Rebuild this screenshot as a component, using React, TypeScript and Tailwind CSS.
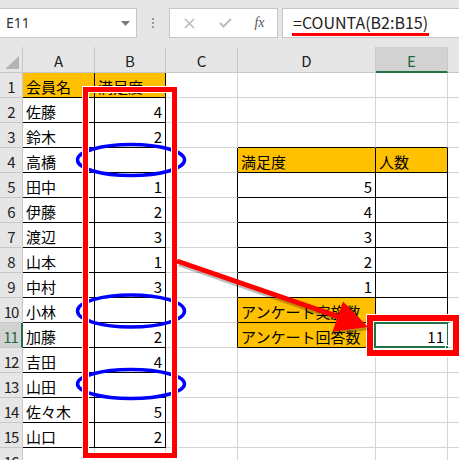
import React from 'react';

const cellFont = "font-['Noto_Sans_CJK_JP',sans-serif]";

const rows: string[][] = [
  ['会員名', '満足度', '', '', '', ''],
  ['佐藤', '4', '', '', '', ''],
  ['鈴木', '2', '', '', '', ''],
  ['高橋', '', '', '満足度', '人数', ''],
  ['田中', '1', '', '5', '', ''],
  ['伊藤', '2', '', '4', '', ''],
  ['渡辺', '3', '', '3', '', ''],
  ['山本', '1', '', '2', '', ''],
  ['中村', '3', '', '1', '', ''],
  ['小林', '', '', 'アンケート実施数', '', ''],
  ['加藤', '2', '', 'アンケート回答数', '11', ''],
  ['吉田', '4', '', '', '', ''],
  ['山田', '', '', '', '', ''],
  ['佐々木', '5', '', '', '', ''],
  ['山口', '2', '', '', '', ''],
  ['', '', '', '', '', ''],
];

const colNames = ['A', 'B', 'C', 'D', 'E', 'F'];
const colWidths = ['w-[72px]', 'w-[71px]', 'w-[72px]', 'w-[138px]', 'w-[72px]', 'w-[72px]'];

// A1:B15 and D4:E11 carry black borders
function inTable(r: number, c: number) {
  if (c <= 1 && r >= 0 && r <= 14) return true;
  if ((c === 3 || c === 4) && r >= 3 && r <= 10) return true;
  return false;
}

function isYellow(r: number, c: number) {
  if (r === 0 && c <= 1) return true;
  if (r === 3 && (c === 3 || c === 4)) return true;
  if ((r === 9 || r === 10) && c === 3) return true;
  return false;
}

function clsx(...parts: (string | false | undefined)[]) {
  return parts.filter(Boolean).join(' ');
}

function Cell({ r, c, value }: { r: number; c: number; value: string }) {
  const right = inTable(r, c) || inTable(r, c + 1);
  const bottom = inTable(r, c) || inTable(r + 1, c);
  const numeric = /^\d+$/.test(value);
  const selected = r === 10 && c === 4;
  return (
    <div
      className={clsx(
        'relative h-full shrink-0 flex items-center border-r border-b px-[3px] text-[15px] leading-none text-black',
        colWidths[c],
        right ? 'border-r-black' : 'border-r-[#d4d4d4]',
        bottom ? 'border-b-black' : 'border-b-[#d4d4d4]',
        isYellow(r, c) ? 'bg-[#ffc000]' : 'bg-white',
        numeric ? 'justify-end' : 'justify-start'
      )}
    >
      <span className="pt-[2px] whitespace-nowrap">{value}</span>
      {selected && (
        <>
          <div className="absolute left-[-2px] top-[-1px] right-[-2px] bottom-[-1px] border-2 border-[#217346]" />
          <div className="absolute right-[-4px] bottom-[-4px] w-[6px] h-[6px] bg-[#217346] border border-white" />
        </>
      )}
    </div>
  );
}

function Toolbar() {
  return (
    <div className="h-[47px] bg-[#e6e6e6] flex items-start pt-[8px]">
      <div className="w-[137px] h-[30px] bg-white border border-l-0 border-[#c6c6c6] flex items-center justify-between pl-[6px] pr-[6px]">
        <span className="font-['Noto_Sans',sans-serif] text-[14px] text-[#333] leading-none">E11</span>
        <svg width="9" height="5" viewBox="0 0 9 5">
          <path d="M0 0 H9 L4.5 5 Z" fill="#7a7a7a" />
        </svg>
      </div>
      <div className="w-[32px] h-[30px] flex flex-col items-center justify-center gap-[2px]">
        <div className="w-[2px] h-[2px] bg-[#9a9a9a]" />
        <div className="w-[2px] h-[2px] bg-[#9a9a9a]" />
        <div className="w-[2px] h-[2px] bg-[#9a9a9a]" />
      </div>
      <div className="w-[109px] h-[30px] bg-white border border-[#c6c6c6] flex items-center">
        <div className="w-[38px] flex justify-center">
          <svg width="11" height="11" viewBox="0 0 11 11">
            <path d="M1 1 L10 10 M10 1 L1 10" stroke="#bcbcbc" strokeWidth="1.6" />
          </svg>
        </div>
        <div className="w-[34px] flex justify-center">
          <svg width="13" height="10" viewBox="0 0 13 10">
            <path d="M1 5 L4.5 8.5 L12 1" stroke="#bcbcbc" strokeWidth="2" fill="none" />
          </svg>
        </div>
        <div className="flex-1 flex justify-center">
          <span className="font-['Liberation_Serif',serif] italic text-[14px] text-[#555] leading-none">fx</span>
        </div>
      </div>
      <div className="ml-[4px] flex-1 h-[30px] bg-white border border-r-0 border-[#c6c6c6] flex items-center pl-[9px]">
        <span className={clsx(cellFont, 'text-[16px] leading-none text-[#222] border-b-[3px] border-[#ff0000] pb-[3px] pt-[4px] px-[1px]')}>
          =COUNTA(B2:B15)
        </span>
      </div>
    </div>
  );
}

function HeaderRow() {
  return (
    <div className={clsx('flex h-[26px]', cellFont)}>
      <div className="w-[23px] shrink-0 h-full bg-[#e6e6e6] border-r border-b border-[#c8c8c8] flex items-end justify-end pr-[3px] pb-[3px]">
        <svg width="14" height="13" viewBox="0 0 14 13">
          <path d="M14 0 V13 H0 Z" fill="#b4b4b4" />
        </svg>
      </div>
      {colNames.map((n, i) => {
        const sel = n === 'E';
        return (
          <div
            key={n}
            className={clsx(
              'shrink-0 h-full flex items-center justify-center text-[15px] leading-none border-r border-[#c8c8c8]',
              colWidths[i],
              sel ? 'bg-[#d2d2d2] text-[#1e6b40] border-b-2 border-b-[#217346]' : 'bg-[#e6e6e6] text-[#222] border-b border-b-[#c8c8c8]'
            )}
          >
            <span className="pt-[2px]">{n}</span>
          </div>
        );
      })}
    </div>
  );
}

function Overlay() {
  // arrow from the red frame round column B to the red frame round E11
  const tip = { x: 368, y: 327 };
  const start = { x: 177, y: 261 };
  const dx = tip.x - start.x;
  const dy = tip.y - start.y;
  const len = Math.hypot(dx, dy);
  const ux = dx / len;
  const uy = dy / len;
  const bx = tip.x - 32 * ux;
  const by = tip.y - 32 * uy;
  const p1 = `${bx - 16 * uy},${by + 16 * ux}`;
  const p2 = `${bx + 16 * uy},${by - 16 * ux}`;
  return (
    <svg className="absolute left-0 top-0 pointer-events-none" width="459" height="460" viewBox="0 0 459 460">
      <ellipse cx="131" cy="160" rx="53.5" ry="15.5" fill="none" stroke="#0000ff" strokeWidth="3.5" />
      <ellipse cx="131" cy="311" rx="53.5" ry="16" fill="none" stroke="#0000ff" strokeWidth="3.5" />
      <ellipse cx="131" cy="384" rx="53.5" ry="14.5" fill="none" stroke="#0000ff" strokeWidth="3.5" />

      <rect x="85.5" y="89.5" width="89" height="366" fill="none" stroke="#ffffff" strokeWidth="7" />
      <rect x="85.5" y="89.5" width="89" height="366" fill="none" stroke="#ff0000" strokeWidth="5" />

      <rect x="370" y="318" width="86" height="35" fill="none" stroke="#ffffff" strokeWidth="8" />
      <rect x="370" y="318" width="86" height="35" fill="none" stroke="#ff0000" strokeWidth="6" />

      <g opacity="0.25" transform="translate(2,3)">
        <line x1={start.x} y1={start.y} x2={bx} y2={by} stroke="#000" strokeWidth="5" />
        <polygon points={`${tip.x},${tip.y} ${p1} ${p2}`} fill="#000" />
      </g>
      <line x1={start.x} y1={start.y} x2={bx + 2 * ux} y2={by + 2 * uy} stroke="#ff0000" strokeWidth="5" />
      <polygon points={`${tip.x},${tip.y} ${p1} ${p2}`} fill="#ff0000" />
    </svg>
  );
}

export default function App() {
  return (
    <div className="relative w-[459px] h-[460px] overflow-hidden bg-white">
      <Toolbar />
      <HeaderRow />
      <div className={clsx('flex flex-col', cellFont)}>
        {rows.map((row, r) => {
          const sel = r === 10;
          return (
            <div key={r} className="flex h-[25px] shrink-0">
              <div
                className={clsx(
                  'w-[23px] shrink-0 h-full flex items-center justify-center text-[15px] leading-none border-b border-b-[#c8c8c8] tracking-[-1px]',
                  sel ? 'bg-[#d2d2d2] text-[#1e6b40] border-r-2 border-r-[#217346]' : 'bg-[#e6e6e6] text-[#222] border-r border-r-[#c8c8c8]'
                )}
              >
                <span className="pt-[2px]">{r + 1}</span>
              </div>
              {row.map((v, c) => (
                <Cell key={c} r={r} c={c} value={v} />
              ))}
            </div>
          );
        })}
      </div>
      <Overlay />
    </div>
  );
}
